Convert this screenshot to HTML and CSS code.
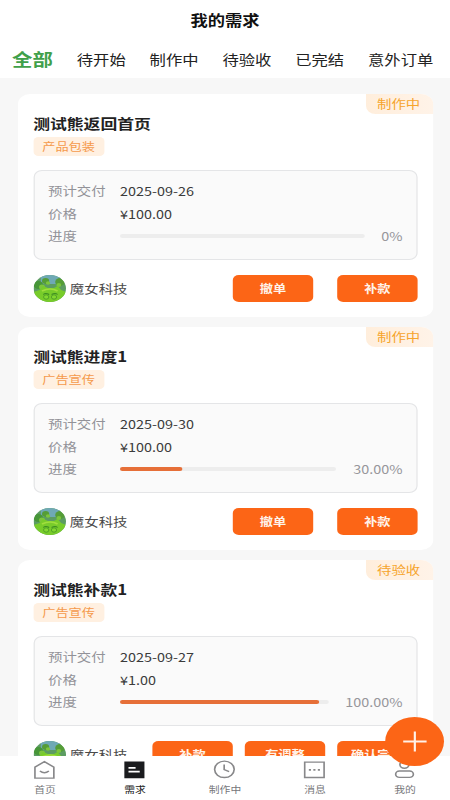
FILE: index.html
```html
<!DOCTYPE html>
<html lang="zh-CN">
<head>
<meta charset="utf-8">
<title>我的需求</title>
<link rel="stylesheet" href="styles.css">
</head>
<body>
<svg class="defs" width="0" height="0">
  <symbol id="bear" viewBox="0 0 27 27">
    <rect width="27" height="27" fill="#5c9c62"/>
    <path d="M6 0h17v9H6z" fill="#6fa9b5"/>
    <circle cx="4" cy="10" r="4" fill="#479638"/><circle cx="10" cy="6" r="3" fill="#559d37"/><circle cx="22" cy="7" r="4" fill="#559d37"/>
    <circle cx="7" cy="12" r="2.5" fill="#7cc63c"/><circle cx="12" cy="8" r="1.8" fill="#7cc63c"/><circle cx="21" cy="10" r="2" fill="#7cc63c"/>
    <path d="M0 17l5-2 3-4 4 2h5l3-2 3 4 4 2v10H0z" fill="#78cc2a"/>
    <path d="M7 16q7-4 13 0" fill="none" stroke="#a0de3d" stroke-width="1.6"/>
    <path d="M8 19.5q2-2 5 0M15 19.5q3-2 5 0" fill="none" stroke="#3c8c22"/>
    <circle cx="10.5" cy="22" r="2.2" fill="#82d82f" stroke="#4a9a28" stroke-width=".8"/><circle cx="17" cy="22" r="2.2" fill="#82d82f" stroke="#4a9a28" stroke-width=".8"/>
  </symbol>
</svg>
<div class="screen">
  <header class="header">我的需求</header>
  <nav class="tabs">
    <span class="tab active">全部</span><span class="tab">待开始</span><span class="tab">制作中</span><span class="tab">待验收</span><span class="tab">已完结</span><span class="tab">意外订单</span>
  </nav>
  <main class="list">
    <section class="card">
      <span class="status">制作中</span>
      <h2 class="title">测试熊返回首页</h2>
      <span class="tag">产品包装</span>
      <div class="info">
        <div class="row"><span class="label">预计交付</span><span>2025-09-26</span></div>
        <div class="row"><span class="label">价格</span><span>¥100.00</span></div>
        <div class="row"><span class="label">进度</span><div class="track"><div class="fill" style="width:0%"></div></div><span class="percent">0%</span></div>
      </div>
      <div class="foot"><svg class="avatar"><use href="#bear"/></svg><span class="company">魔女科技</span><div class="actions"><span class="btn">撤单</span><span class="btn">补款</span></div></div>
    </section>
    <section class="card">
      <span class="status">制作中</span>
      <h2 class="title">测试熊进度1</h2>
      <span class="tag">广告宣传</span>
      <div class="info">
        <div class="row"><span class="label">预计交付</span><span>2025-09-30</span></div>
        <div class="row"><span class="label">价格</span><span>¥100.00</span></div>
        <div class="row"><span class="label">进度</span><div class="track"><div class="fill" style="width:28.6%"></div></div><span class="percent">30.00%</span></div>
      </div>
      <div class="foot"><svg class="avatar"><use href="#bear"/></svg><span class="company">魔女科技</span><div class="actions"><span class="btn">撤单</span><span class="btn">补款</span></div></div>
    </section>
    <section class="card">
      <span class="status">待验收</span>
      <h2 class="title">测试熊补款1</h2>
      <span class="tag">广告宣传</span>
      <div class="info">
        <div class="row"><span class="label">预计交付</span><span>2025-09-27</span></div>
        <div class="row"><span class="label">价格</span><span>¥1.00</span></div>
        <div class="row"><span class="label">进度</span><div class="track"><div class="fill" style="width:95.4%"></div></div><span class="percent">100.00%</span></div>
      </div>
      <div class="foot"><svg class="avatar"><use href="#bear"/></svg><span class="company">魔女科技</span><div class="actions tight"><span class="btn">补款</span><span class="btn">有调整</span><span class="btn">确认完成</span></div></div>
    </section>
  </main>
  <nav class="bottom">
    <div class="item"><svg class="icon" viewBox="0 0 20 20"><path d="M2 7.2L10 1.6l8 5.6v11.2H2z"/><path d="M6.2 11.2q3.8 3.4 7.6 0"/></svg>首页</div>
    <div class="item on"><svg class="icon" viewBox="0 0 20 20"><path class="solid" d="M1.5 1.5h17v17h-17z"/><path class="line" d="M5 8h6M5 11.8h9.5"/></svg>需求</div>
    <div class="item"><svg class="icon" viewBox="0 0 20 20"><circle cx="10" cy="9.5" r="8.3"/><path d="M9.8 4.5v5.3l4.2 2"/></svg>制作中</div>
    <div class="item"><svg class="icon" viewBox="0 0 20 20"><path d="M1.8 2.2h16.4v15.6H1.8z"/><path class="dots" d="M5.3 10h1.8M9.1 10h1.8M12.9 10h1.8"/></svg>消息</div>
    <div class="item"><svg class="icon" viewBox="0 0 20 20"><circle cx="10" cy="4.6" r="3.8"/><rect x="2.6" y="11.2" width="15" height="6.4" rx="3.2"/></svg>我的</div>
  </nav>
  <div class="fab"><svg viewBox="0 0 49 49"><path d="M15 24.5h19.5M24.7 14.5v20"/></svg></div>
</div>
</body>
</html>
```
FILE: styles.css
```css
* { box-sizing: border-box; }
body {
  margin: 0;
  overflow: hidden;
  font-family: "Noto Sans CJK SC", sans-serif;
}
.defs { position: absolute; }
/* 375px layout widened to fill the 450px viewport */
.screen {
  position: relative;
  display: flex;
  flex-direction: column;
  width: 375px;
  height: 800px;
  overflow: hidden;
  background: #f7f7f7;
  transform: scaleX(1.2);
  transform-origin: 0 0;
}
.header {
  flex: none;
  height: 40px;
  line-height: 40px;
  background: #fff;
  text-align: center;
  font-size: 14.4px;
  font-weight: 700;
  color: #111;
}
.tabs {
  flex: none;
  display: flex;
  align-items: center;
  gap: 19.9px;
  height: 38px;
  padding: 0 0 1px 10.1px;
  background: #fff;
  font-size: 13.6px;
  color: #222;
  white-space: nowrap;
}
.active {
  font-size: 17px;
  font-weight: 700;
  color: #40a04a;
}
.list {
  flex: 1;
  min-height: 0;
  overflow: hidden;
  display: flex;
  flex-direction: column;
  gap: 10px;
  padding: 16px 14.3px 0 14.7px;
}
.card {
  position: relative;
  flex: none;
  height: 223px;
  padding: 19px 13px 0;
  border-radius: 10px;
  background: #fff;
}
.status {
  position: absolute;
  top: 0;
  right: 0;
  width: 56px;
  height: 20px;
  padding-right: 1px;
  line-height: 20px;
  text-align: center;
  font-size: 12px;
  color: #f6a42c;
  background: linear-gradient(90deg, #ffeedc, #fff3e8);
  border-radius: 0 10px 0 8px;
}
.title {
  margin: 0;
  height: 20px;
  line-height: 20px;
  font-size: 14px;
  font-weight: 700;
  color: #222;
}
.tag {
  display: block;
  width: 59px;
  height: 19px;
  margin-top: 4px;
  line-height: 19px;
  text-align: center;
  font-size: 11px;
  color: #f59a4c;
  background: #fff0e1;
  border-radius: 4px;
}
.info {
  height: 90px;
  margin-top: 14px;
  padding: 8px 11.3px 0;
  border: 1px solid #e4e5e7;
  border-radius: 7px;
  background: #fafafa;
  font-size: 12px;
  color: #3b3b3b;
}
.row {
  display: flex;
  align-items: center;
  height: 22.8px;
}
.label {
  width: 60px;
  color: #929298;
}
.track {
  flex: 1;
  height: 4px;
  border-radius: 2px;
  background: #ededed;
}
.fill {
  height: 4px;
  border-radius: 2px;
  background: #e66f38;
}
.percent {
  margin-left: 14px;
  color: #96969a;
}
.foot {
  display: flex;
  align-items: center;
  height: 27px;
  margin-top: 15px;
  font-size: 12px;
  color: #4a4a4a;
}
.avatar {
  width: 27px;
  height: 27px;
  border-radius: 50%;
}
.company { margin-left: 3.5px; }
.actions {
  display: flex;
  gap: 20.5px;
  margin-left: auto;
}
.tight { gap: 10.5px; }
.btn {
  width: 66.5px;
  height: 27px;
  line-height: 27px;
  border-radius: 5px;
  background: #fc6516;
  color: #fff3ea;
  text-align: center;
  font-size: 11px;
  font-weight: 700;
}
.bottom {
  flex: none;
  display: flex;
  height: 44.5px;
  background: #fff;
}
.item {
  flex: 1;
  display: flex;
  flex-direction: column;
  align-items: center;
  padding-top: 4.3px;
  font-size: 9px;
  line-height: 20.5px;
  color: #77777a;
}
.on { color: #222; }
.icon {
  width: 20px;
  height: 20px;
  margin-right: 1.2px;
  fill: none;
  stroke: #88888a;
  stroke-width: 1.4;
}
.icon .solid { fill: #1a1b1e; stroke: none; }
.icon .line { stroke: #fff; stroke-width: 1.6; }
.icon .dots { stroke-width: 1.8; }
.fab {
  position: absolute;
  left: 321px;
  top: 717px;
  width: 49px;
  height: 49px;
  border-radius: 50%;
  background: #fc6516;
}
.fab svg {
  display: block;
  fill: none;
  stroke: #fff1e8;
  stroke-width: 1.8;
}
```
